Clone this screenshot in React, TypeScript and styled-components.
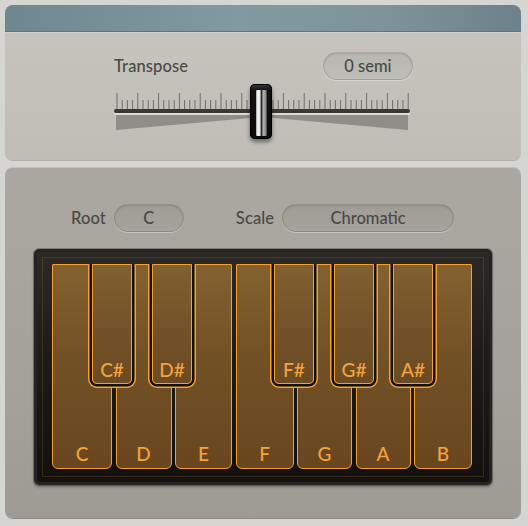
import styled, { createGlobalStyle } from "styled-components";

const GlobalStyle = createGlobalStyle`
  html, body {
    margin: 0;
    padding: 0;
    background: #d5d5d1;
  }
  body {
    font-family: Lato, "Open Sans", sans-serif;
  }
`;

interface IWhiteKey {
  note: string;
  width: number;
}

interface IBlackKey {
  note: string;
  left: number;
}

const whiteKeys: IWhiteKey[] = [
  { note: "C", width: 60 },
  { note: "D", width: 56 },
  { note: "E", width: 57 },
  { note: "F", width: 58 },
  { note: "G", width: 55 },
  { note: "A", width: 55 },
  { note: "B", width: 58 },
];

const blackKeys: IBlackKey[] = [
  { note: "C#", left: 40 },
  { note: "D#", left: 100 },
  { note: "F#", left: 222 },
  { note: "G#", left: 282 },
  { note: "A#", left: 341 },
];

// slider scale: 15 major ticks, 3 minor ticks between each pair
const MAJOR_STEP = 20.8;
const ticks: { x: number; major: boolean }[] = [];
for (let i = 0; i < 15; i++) {
  const x = 3 + i * MAJOR_STEP;
  ticks.push({ x, major: true });
  if (i < 14) {
    for (let k = 1; k < 4; k++) ticks.push({ x: x + (k * MAJOR_STEP) / 4, major: false });
  }
}

const SliderScale = () => (
  <svg width="296" height="38" viewBox="0 0 296 38">
    {ticks.map((t, i) => (
      <line
        key={i}
        x1={t.x}
        x2={t.x}
        y1={t.major ? 0 : 7}
        y2={16}
        stroke="#6f6d68"
        strokeWidth="1"
      />
    ))}
    <polygon points="2,22 294,22 294,37 148,24 2,37" fill="#8f8d87" />
    <rect x="0" y="20" width="296" height="2" fill="#e2e1dc" opacity="0.8" />
    <rect x="0" y="16" width="296" height="4" rx="2" fill="#3a3834" />
  </svg>
);

export default function App() {
  return (
    <>
      <GlobalStyle />
      <Page>
        <TopPanel>
          <Header />
          <TransposeBody>
            <SliderBlock>
              <LabelRow>
                <Label>Transpose</Label>
                <ValuePill $width={90} $shift={3}>0 semi</ValuePill>
              </LabelRow>
              <SliderArea>
                <SliderScale />
                <Thumb>
                  <ThumbStripe />
                </Thumb>
              </SliderArea>
            </SliderBlock>
          </TransposeBody>
        </TopPanel>

        <BottomPanel>
          <ControlsRow>
            <Label>Root</Label>
            <ValuePill $width={70}>C</ValuePill>
            <Spacer />
            <Label>Scale</Label>
            <ValuePill $width={172}>Chromatic</ValuePill>
          </ControlsRow>

          <KeyboardFrame>
            <KeyBed>
              {whiteKeys.map((k) => (
                <WhiteKey key={k.note} $width={k.width}>
                  {k.note}
                </WhiteKey>
              ))}
              {blackKeys.map((k) => (
                <BlackKey key={k.note} $left={k.left}>
                  {k.note}
                </BlackKey>
              ))}
            </KeyBed>
          </KeyboardFrame>
        </BottomPanel>
      </Page>
    </>
  );
}

const Page = styled.div`
  box-sizing: border-box;
  width: 528px;
  height: 526px;
  padding: 5px 7px 8px 5px;
  display: flex;
  flex-direction: column;
  gap: 7px;
`;

const TopPanel = styled.div`
  height: 155px;
  border-radius: 8px;
  overflow: hidden;
  display: flex;
  flex-direction: column;
  background: linear-gradient(180deg, #c6c5be 0%, #bfbdb6 100%);
  box-shadow: 0 1px 0 #aeada7;
`;

const Header = styled.div`
  height: 26px;
  background: linear-gradient(90deg, #6f8790 0%, #8199a0 45%, #7d9399 75%, #6c8189 100%);
  border-bottom: 1px solid #5f747c;
  box-shadow: 0 1px 0 #d2d2cc;
`;

const TransposeBody = styled.div`
  flex: 1;
  display: flex;
  justify-content: center;
  padding-top: 20px;
`;

const SliderBlock = styled.div`
  width: 296px;
  display: flex;
  flex-direction: column;
  margin-left: -2px;
`;

const LabelRow = styled.div`
  display: flex;
  align-items: center;
  justify-content: space-between;
  height: 28px;
`;

const Label = styled.span`
  font-size: 16.5px;
  font-weight: 500;
  color: #4a4946;
  letter-spacing: 0.1px;
`;

const ValuePill = styled.div<{ $width: number; $shift?: number }>`
  box-sizing: border-box;
  width: ${(p) => p.$width}px;
  height: 28px;
  margin-right: ${(p) => -(p.$shift ?? 0)}px;
  border-radius: 14px;
  display: flex;
  align-items: center;
  justify-content: center;
  font-size: 16.5px;
  font-weight: 500;
  color: #4a4946;
  background: linear-gradient(180deg, rgba(0, 0, 0, 0.06), rgba(0, 0, 0, 0.02));
  border: 1px solid rgba(0, 0, 0, 0.12);
  box-shadow: inset 0 1px 2px rgba(0, 0, 0, 0.12), 0 1px 0 rgba(255, 255, 255, 0.35);
`;

const SliderArea = styled.div`
  position: relative;
  margin-top: 13px;
  height: 38px;
`;

const Thumb = styled.div`
  position: absolute;
  left: 136px;
  top: -9px;
  width: 22px;
  height: 55px;
  border-radius: 5px;
  background: linear-gradient(180deg, #3a3a3a 0%, #111 12%, #0b0b0b 100%);
  box-shadow: 0 3px 4px rgba(0, 0, 0, 0.45), inset 0 0 0 1px #000;
  display: flex;
  justify-content: center;
  padding-top: 6px;
  box-sizing: border-box;
`;

const ThumbStripe = styled.div`
  width: 11px;
  height: 46px;
  border-radius: 1px;
  background: linear-gradient(
    90deg,
    #9a9a9a 0%,
    #f4f4f4 15%,
    #e6e6e6 38%,
    #2a2a2a 45%,
    #2a2a2a 55%,
    #b8b8b8 62%,
    #8a8a8a 90%,
    #2a2a2a 100%
  );
`;

const BottomPanel = styled.div`
  flex: 1;
  border-radius: 8px;
  background: linear-gradient(180deg, #aaa8a0 0%, #a4a29a 60%, #9d9b93 100%);
  box-shadow: inset 0 1px 0 rgba(255, 255, 255, 0.25), 0 1px 0 #8e8d87;
  display: flex;
  flex-direction: column;
  padding-top: 37px;
  padding-left: 29px;
`;

const ControlsRow = styled.div`
  display: flex;
  align-items: center;
  padding-left: 37px;
  gap: 8px;
`;

const Spacer = styled.div`
  width: 36px;
`;

const KeyboardFrame = styled.div`
  position: relative;
  box-sizing: border-box;
  margin-top: 17px;
  width: 458px;
  height: 236px;
  border: 3px solid #252422;
  border-radius: 5px;
  padding: 12px 16px 13px 15px;
  background: linear-gradient(180deg, #2d2a26 0%, #1c1a17 50%, #121110 100%);
  box-shadow: 0 0 0 1px rgba(0, 0, 0, 0.25), 0 2px 3px rgba(0, 0, 0, 0.3);

  &::before {
    content: "";
    position: absolute;
    inset: 5px;
    border: 1px solid rgba(150, 105, 45, 0.28);
    pointer-events: none;
  }
`;

const KeyBed = styled.div`
  position: relative;
  display: flex;
  gap: 3.5px;
  height: 205px;
  overflow: hidden;
`;

const ORANGE = "#f5a032";

const WhiteKey = styled.div<{ $width: number }>`
  box-sizing: border-box;
  width: ${(p) => p.$width}px;
  height: 100%;
  border: 1.5px solid ${ORANGE};
  border-radius: 1px 1px 6px 6px;
  background: linear-gradient(180deg, #83612f 0%, #735126 45%, #69461f 100%);
  display: flex;
  align-items: flex-end;
  justify-content: center;
  padding-bottom: 3px;
  font-size: 19px;
  font-weight: 500;
  color: #f5a33c;
`;

// the dark ring plus the orange ring round it make the notch in the neighbouring keys
const BlackKey = styled.div<{ $left: number }>`
  position: absolute;
  top: 0;
  left: ${(p) => p.$left}px;
  box-sizing: border-box;
  width: 40px;
  height: 120px;
  border: 1.5px solid ${ORANGE};
  border-radius: 1px 1px 5px 5px;
  background: linear-gradient(180deg, #806030 0%, #74532a 50%, #6c4b24 100%);
  box-shadow: 0 0 0 2.5px #141210, 0 0 0 4px ${ORANGE};
  display: flex;
  align-items: flex-end;
  justify-content: center;
  padding-bottom: 2px;
  font-size: 19px;
  font-weight: 500;
  color: #f5a33c;
`;
